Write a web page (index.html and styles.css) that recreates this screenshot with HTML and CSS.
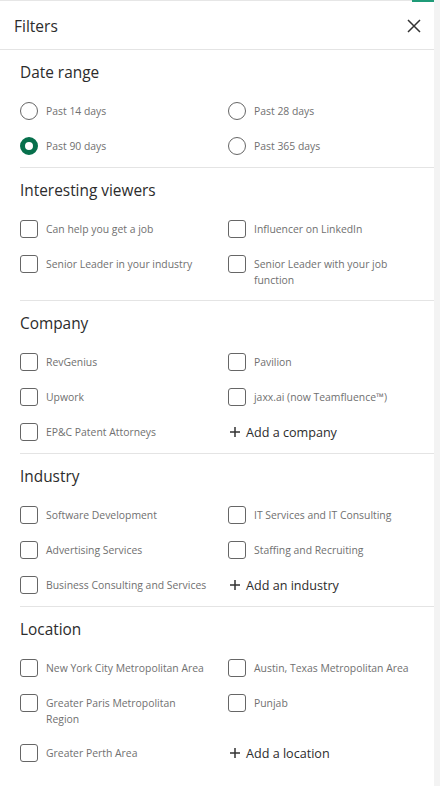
FILE: index.html
```html
<!DOCTYPE html>
<html lang="en">
<head>
    <meta charset="UTF-8">
    <meta name="viewport" content="width=device-width, initial-scale=1.0">
    <title>Filters</title>
    <link rel="stylesheet" href="styles.css">
</head>
<body>
<div class="shell">
    <div class="panel">
        <div class="topline"><span class="topline-rest"></span><span class="topline-accent"></span></div>

        <header class="panel-head">
            <h1>Filters</h1>
            <button class="close" aria-label="Close">
                <svg width="14" height="14" viewBox="0 0 14 14"><path d="M1 1 L13 13 M13 1 L1 13" stroke="#333" stroke-width="1.5" fill="none"/></svg>
            </button>
        </header>

        <!-- Date range -->
        <section class="group">
            <h2>Date range</h2>
            <div class="options">
                <label class="opt"><span class="radio"></span><span class="txt">Past 14 days</span></label>
                <label class="opt"><span class="radio"></span><span class="txt">Past 28 days</span></label>
                <label class="opt"><span class="radio checked"></span><span class="txt">Past 90 days</span></label>
                <label class="opt"><span class="radio"></span><span class="txt">Past 365 days</span></label>
            </div>
        </section>

        <!-- Interesting viewers -->
        <section class="group">
            <h2>Interesting viewers</h2>
            <div class="options">
                <label class="opt"><span class="box"></span><span class="txt">Can help you get a job</span></label>
                <label class="opt"><span class="box"></span><span class="txt">Influencer on LinkedIn</span></label>
                <label class="opt"><span class="box"></span><span class="txt">Senior Leader in your industry</span></label>
                <label class="opt"><span class="box"></span><span class="txt">Senior Leader with your job function</span></label>
            </div>
        </section>

        <!-- Company -->
        <section class="group">
            <h2>Company</h2>
            <div class="options">
                <label class="opt"><span class="box"></span><span class="txt">RevGenius</span></label>
                <label class="opt"><span class="box"></span><span class="txt">Pavilion</span></label>
                <label class="opt"><span class="box"></span><span class="txt">Upwork</span></label>
                <label class="opt"><span class="box"></span><span class="txt">jaxx.ai (now Teamfluence™)</span></label>
                <label class="opt"><span class="box"></span><span class="txt">EP&amp;C Patent Attorneys</span></label>
                <button class="add">
                    <svg width="10" height="10" viewBox="0 0 10 10"><path d="M5 0 V10 M0 5 H10" stroke="#333" stroke-width="1.5" fill="none"/></svg>
                    Add a company
                </button>
            </div>
        </section>

        <!-- Industry -->
        <section class="group">
            <h2>Industry</h2>
            <div class="options">
                <label class="opt"><span class="box"></span><span class="txt">Software Development</span></label>
                <label class="opt"><span class="box"></span><span class="txt">IT Services and IT Consulting</span></label>
                <label class="opt"><span class="box"></span><span class="txt">Advertising Services</span></label>
                <label class="opt"><span class="box"></span><span class="txt">Staffing and Recruiting</span></label>
                <label class="opt"><span class="box"></span><span class="txt">Business Consulting and Services</span></label>
                <button class="add">
                    <svg width="10" height="10" viewBox="0 0 10 10"><path d="M5 0 V10 M0 5 H10" stroke="#333" stroke-width="1.5" fill="none"/></svg>
                    Add an industry
                </button>
            </div>
        </section>

        <!-- Location -->
        <section class="group last">
            <h2>Location</h2>
            <div class="options">
                <label class="opt"><span class="box"></span><span class="txt">New York City Metropolitan Area</span></label>
                <label class="opt"><span class="box"></span><span class="txt">Austin, Texas Metropolitan Area</span></label>
                <label class="opt"><span class="box"></span><span class="txt">Greater Paris Metropolitan Region</span></label>
                <label class="opt"><span class="box"></span><span class="txt">Punjab</span></label>
                <label class="opt"><span class="box"></span><span class="txt">Greater Perth Area</span></label>
                <button class="add">
                    <svg width="10" height="10" viewBox="0 0 10 10"><path d="M5 0 V10 M0 5 H10" stroke="#333" stroke-width="1.5" fill="none"/></svg>
                    Add a location
                </button>
            </div>
        </section>
    </div>
    <div class="scrolltrack"></div>
</div>
</body>
</html>
```

FILE: styles.css
```css
html, body {
    margin: 0;
    padding: 0;
    background: #fff;
}
body {
    font-family: "Open Sans", "Noto Sans", sans-serif;
    color: #333;
}
.shell {
    display: flex;
    width: 440px;
    min-height: 786px;
}
.panel {
    width: 434px;
    background: #fff;
}
.scrolltrack {
    width: 6px;
    background: #f3f3f3;
}

/* thin strip at the very top */
.topline {
    display: flex;
    height: 2px;
}
.topline-rest {
    flex: 1;
    border-top: 1px solid #e6e6e6;
}
.topline-accent {
    width: 22px;
    background: #1f9b78;
}

.panel-head {
    display: flex;
    align-items: center;
    justify-content: space-between;
    height: 47px;
    padding: 0 11px 0 14px;
    border-bottom: 1px solid #e4e4e4;
}
.panel-head h1 {
    margin: 0;
    font-size: 15.5px;
    font-weight: 400;
    color: #2c2c2c;
}
.close {
    background: none;
    border: none;
    padding: 0;
    width: 18px;
    height: 18px;
    display: flex;
    align-items: center;
    justify-content: center;
    cursor: pointer;
}

.group {
    margin-left: 20px;
    padding: 11px 16px 12px 0;
    border-bottom: 1px solid #e4e4e4;
}
.group.last {
    border-bottom: none;
}
.group h2 {
    margin: 0 0 17px;
    font-size: 15.4px;
    line-height: 24px;
    font-weight: 400;
    color: #2c2c2c;
}
.options {
    display: grid;
    grid-template-columns: 190px 190px;
    column-gap: 18px;
    row-gap: 17px;
}
.opt {
    display: flex;
    align-items: flex-start;
    gap: 8px;
    cursor: pointer;
}
.txt {
    padding-top: 1px;
    font-size: 10.4px;
    line-height: 16px;
    color: #707070;
}
.radio, .box {
    flex: none;
    width: 18px;
    height: 18px;
    box-sizing: border-box;
    border: 1px solid #666;
}
.radio {
    border-radius: 50%;
}
.radio.checked {
    border: 5px solid #07704c;
}
.box {
    border-radius: 3px;
}

.add {
    display: flex;
    align-items: center;
    gap: 6px;
    height: 18px;
    padding: 0 0 0 2px;
    background: none;
    border: none;
    font-family: inherit;
    font-size: 12.6px;
    color: #2c2c2c;
    cursor: pointer;
    text-align: left;
}
```
